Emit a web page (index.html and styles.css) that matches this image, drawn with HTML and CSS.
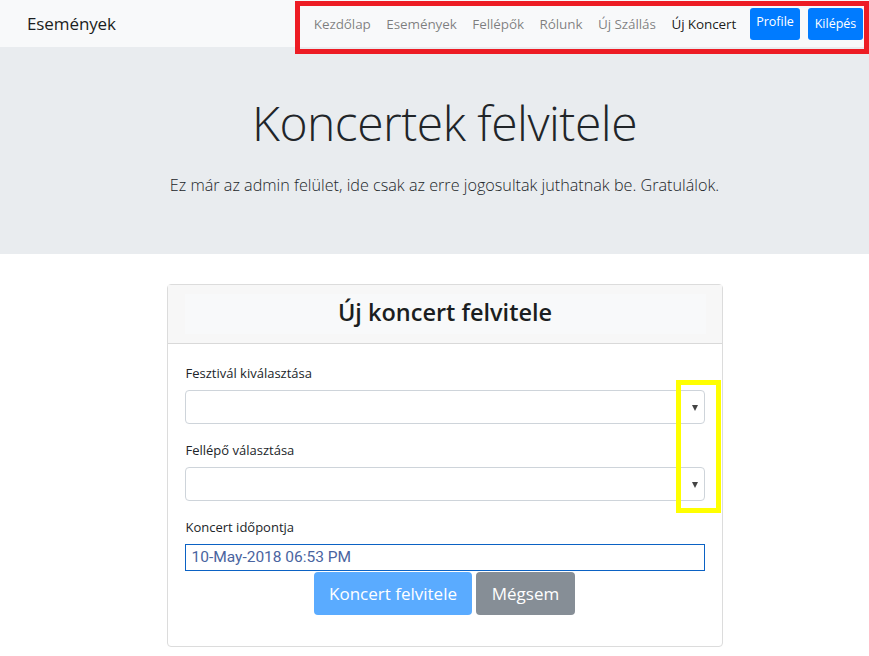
FILE: index.html
```html
<!DOCTYPE html>
<html lang="hu">
<head>
<meta charset="utf-8">
<title>Koncertek felvitele</title>
<link rel="stylesheet" href="styles.css">
</head>
<body>
<nav class="navbar">
  <a class="brand">Események</a>
  <ul class="nav">
    <li><a class="nav-link">Kezdőlap</a></li>
    <li><a class="nav-link">Események</a></li>
    <li><a class="nav-link">Fellépők</a></li>
    <li><a class="nav-link">Rólunk</a></li>
    <li><a class="nav-link">Új Szállás</a></li>
    <li><a class="nav-link active">Új Koncert</a></li>
    <li><a class="btn-nav btn-profile">Profile</a></li>
    <li><a class="btn-nav btn-logout">Kilépés</a></li>
  </ul>
  <div class="mark-red"></div>
</nav>
<header class="jumbotron">
  <h1 class="display">Koncertek felvitele</h1>
  <p class="lead">Ez már az admin felület, ide csak az erre jogosultak juthatnak be. Gratulálok.</p>
</header>
<main class="content">
  <section class="card">
    <div class="card-header">
      <h2 class="card-title">Új koncert felvitele</h2>
    </div>
    <form class="card-body">
      <label class="label">Fesztivál kiválasztása</label>
      <div class="select"><span class="caret"></span></div>
      <label class="label">Fellépő választása</label>
      <div class="select"><span class="caret"></span></div>
      <label class="label">Koncert időpontja</label>
      <div class="date-input">10-May-2018 06:53 PM</div>
      <div class="actions">
        <button type="button" class="btn btn-primary">Koncert felvitele</button>
        <button type="button" class="btn btn-secondary">Mégsem</button>
      </div>
      <div class="mark-yellow"></div>
    </form>
  </section>
</main>
</body>
</html>
```

FILE: styles.css
```css
* { box-sizing: border-box; }
html, body { margin: 0; padding: 0; }
body {
  font-family: "Open Sans", "Noto Sans", sans-serif;
  color: #212529;
  background: #fff;
  width: 869px;
  height: 656px;
  overflow: hidden;
  position: relative;
}
.navbar {
  height: 47px;
  background: #f8f9fa;
  display: flex;
  align-items: center;
  justify-content: space-between;
  padding: 0 6px 0 27px;
}
.brand {
  font-size: 17px;
  color: #1b1e21;
  letter-spacing: -0.1px;
}
.nav {
  list-style: none;
  margin: 0;
  padding: 0;
  display: flex;
  align-items: center;
  height: 100%;
}
.nav-link {
  display: block;
  font-size: 13.5px;
  color: rgba(0,0,0,.5);
  padding: 0 7.8px;
  letter-spacing: -0.1px;
}
.nav-link.active { color: rgba(0,0,0,.9); margin-right: 6px; }
.btn-nav {
  display: flex;
  align-items: center;
  justify-content: center;
  background: #007bff;
  color: #fff;
  font-size: 12.5px;
  height: 32px;
  border-radius: 3px;
  padding: 0 6px;
}
.btn-profile { width: 50px; margin-right: 8px; padding-bottom: 4px; }
.btn-logout { width: 55px; }
.mark-red {
  position: absolute;
  left: 295px;
  top: 1px;
  width: 574px;
  height: 53px;
  border: 5px solid #ed1c24;
  pointer-events: none;
}
.jumbotron {
  background: #e9ecef;
  height: 207px;
  text-align: center;
  padding: 52px 0 0 20px;
}
.display {
  margin: 0;
  font-weight: 300;
  font-size: 48px;
  line-height: 1;
  color: #212529;
  letter-spacing: -0.5px;
}
.lead {
  margin: 0;
  font-weight: 300;
  font-size: 16.2px;
  color: #212529;
  position: relative;
  top: 27px;
}
.content {
  padding: 30px 0 0 20px;
  display: flex;
  justify-content: center;
}
.card {
  width: 556px;
  height: 363px;
  border: 1px solid #dcdcdc;
  border-radius: 4px;
  display: flex;
  flex-direction: column;
}
.card-header {
  height: 59px;
  background: #f7f7f7;
  border-bottom: 1px solid #d9d9d9;
  padding: 9px 16px 9px 17px;
}
.card-title {
  margin: 0;
  height: 40px;
  background: #f8f9fa;
  font-size: 23.5px;
  font-weight: 600;
  text-align: center;
  line-height: 36px;
  color: #1b1e21;
}
.card-body {
  position: relative;
  padding: 18px 17px 0 17px;
  display: flex;
  flex-direction: column;
}
.label {
  font-size: 13px;
  line-height: 20px;
  margin: 1px 0 7px 1px;
  color: #212529;
}
.select {
  height: 34px;
  border: 1px solid #ced4da;
  border-radius: 4px;
  position: relative;
  margin-bottom: 15px;
}
.caret {
  position: absolute;
  right: 6px;
  top: 14px;
  width: 0;
  height: 0;
  border-left: 3.5px solid transparent;
  border-right: 3.5px solid transparent;
  border-top: 6px solid #444;
}
.date-input {
  height: 27px;
  border: 1px solid #0b62c4;
  font-family: "Roboto", "Noto Sans", sans-serif;
  font-size: 15.5px;
  line-height: 25px;
  color: #4a64a0;
  padding-left: 6px;
}
.actions {
  display: flex;
  justify-content: center;
  gap: 4px;
  margin-top: 1px;
}
.btn {
  font-family: "Open Sans", "Noto Sans", sans-serif;
  height: 43px;
  border: 0;
  border-radius: 4px;
  color: #fff;
  font-size: 17px;
  padding: 0 10px;
}
.btn-primary { background: #5aabff; width: 158px; }
.btn-secondary { background: #868e96; width: 99px; }
.mark-yellow {
  position: absolute;
  left: 508px;
  top: 36px;
  width: 45px;
  height: 133px;
  border: 5px solid #ffff00;
}
```
